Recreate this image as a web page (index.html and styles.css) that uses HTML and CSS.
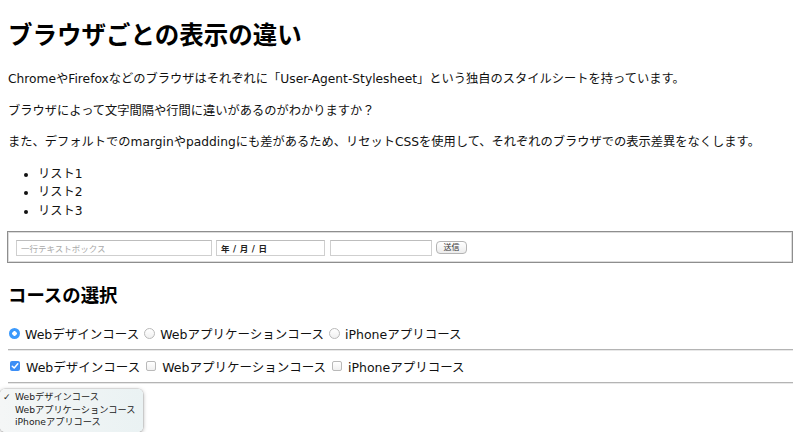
FILE: index.html
```html
<!DOCTYPE html>
<html lang="ja">
<head>
<meta charset="utf-8">
<title>ブラウザごとの表示の違い</title>
<link rel="stylesheet" href="styles.css">
</head>
<body>
<h1 class="title">ブラウザごとの表示の違い</h1>
<p class="text">ChromeやFirefoxなどのブラウザはそれぞれに「User-Agent-Stylesheet」という独自のスタイルシートを持っています。</p>
<p class="text">ブラウザによって文字間隔や行間に違いがあるのがわかりますか？</p>
<p class="text">また、デフォルトでのmarginやpaddingにも差があるため、リセットCSSを使用して、それぞれのブラウザでの表示差異をなくします。</p>
<ul class="list">
  <li>リスト1</li>
  <li>リスト2</li>
  <li>リスト3</li>
</ul>
<div class="fieldset">
  <span class="input input-text"><span class="placeholder">一行テキストボックス</span></span>
  <span class="input input-date">年 / 月 / 日</span>
  <span class="input input-blank"></span>
  <span class="button">送信</span>
</div>
<h2 class="subtitle">コースの選択</h2>
<div class="choice-row first">
  <span class="radio checked"></span><span class="label">Webデザインコース</span>
  <span class="radio"></span><span class="label">Webアプリケーションコース</span>
  <span class="radio"></span><span class="label">iPhoneアプリコース</span>
</div>
<div class="rule"></div>
<div class="choice-row second">
  <span class="check checked"><svg width="8" height="8" viewBox="0 0 8 8"><path d="M1.3 4.2 L3.2 6 L6.8 1.8" fill="none" stroke="#fff" stroke-width="1.5" stroke-linecap="round" stroke-linejoin="round"/></svg></span><span class="label">Webデザインコース</span>
  <span class="check"></span><span class="label">Webアプリケーションコース</span>
  <span class="check"></span><span class="label">iPhoneアプリコース</span>
</div>
<div class="rule last"></div>
<div class="popup">
  <div class="option"><span class="tick">✓</span>Webデザインコース</div>
  <div class="option">Webアプリケーションコース</div>
  <div class="option">iPhoneアプリコース</div>
</div>
</body>
</html>
```
FILE: styles.css
```css
html, body {
  margin: 0;
  padding: 0;
  background: #fff;
}
body {
  padding: 0 7px 0 8px;
  font-family: "DejaVu Sans", "Noto Sans CJK JP", sans-serif;
  font-size: 12.25px;
  color: #111;
}
.title {
  margin: 19px 0 0;
  font-family: "Noto Sans CJK JP", sans-serif;
  font-size: 24.5px;
  line-height: 30px;
  font-weight: bold;
  color: #000;
}
.text {
  margin: 0;
  margin-top: 13.5px;
  line-height: 18px;
  word-spacing: 0.5px;
}
.title + .text {
  margin-top: 21px;
}
.list {
  margin: 13.5px 0 0;
  padding-left: 30px;
  line-height: 18.5px;
}
.fieldset {
  margin: 11px 0 0 -1px;
  height: 29px;
  border: 1px solid #8e8e8e;
  box-shadow: inset 0 0 0 1px #dcdcdc;
  display: flex;
  align-items: center;
  padding: 1px 0 0 8px;
}
.input {
  box-sizing: border-box;
  height: 16px;
  border: 1px solid #cfcfcf;
  border-top-color: #bdbdbd;
  background: #fff;
  display: flex;
  align-items: center;
  padding-left: 4px;
  font-size: 8.5px;
}
.input-text { width: 196px; }
.input-date { width: 109px; margin-left: 4px; font-weight: bold; color: #222; letter-spacing: 0.3px; }
.input-blank { width: 102px; margin-left: 5px; }
.placeholder { color: #aaa; }
.button {
  box-sizing: border-box;
  margin-left: 4px;
  width: 31px;
  height: 13px;
  border: 1px solid #b4b4b4;
  border-radius: 4px;
  background: linear-gradient(#fff, #ececec);
  font-size: 8px;
  line-height: 11px;
  text-align: center;
  color: #333;
}
.subtitle {
  margin: 19px 0 0;
  font-family: "Noto Sans CJK JP", sans-serif;
  font-size: 18.4px;
  line-height: 24px;
  font-weight: bold;
  color: #000;
}
.choice-row {
  height: 18px;
  display: flex;
  align-items: center;
  padding-left: 1px;
  font-size: 12.5px;
}
.choice-row.first {
  margin-top: 18px;
}
.choice-row.second {
  margin-top: 6px;
}
.label {
  margin-right: 5px;
}
.radio {
  box-sizing: border-box;
  width: 11px;
  height: 11px;
  border-radius: 50%;
  border: 1px solid #b9b9b9;
  background: linear-gradient(#fff, #f0f0f0);
  margin-right: 5px;
  flex: none;
}
.radio.checked {
  border: none;
  background: radial-gradient(circle, #fff 0 2px, #3b99fc 2.5px);
}
.check {
  box-sizing: border-box;
  width: 10px;
  height: 10px;
  border-radius: 2px;
  border: 1px solid #b9b9b9;
  background: linear-gradient(#fff, #f0f0f0);
  margin-right: 6px;
  margin-left: 1px;
  flex: none;
  display: flex;
  align-items: center;
  justify-content: center;
}
.check.checked {
  border: none;
  background: #3b8ef6;
}
.rule {
  margin-top: 7px;
  height: 1px;
  background: #b4b4b4;
  border-bottom: 1px solid #e8e8e8;
}
.rule.last {
  margin-top: 7px;
}
.popup {
  margin: 5px 0 0 -8px;
  width: 143px;
  height: 43px;
  box-sizing: border-box;
  padding: 2px 0 0 0;
  border-radius: 5px;
  background: linear-gradient(90deg, #f4f6f6, #eaf2f3);
  box-shadow: 0 1px 4px rgba(0, 0, 0, 0.35), 0 0 0 0.5px rgba(0, 0, 0, 0.15);
  font-size: 9.2px;
  line-height: 12.5px;
  color: #222;
}
.option {
  padding-left: 15px;
  position: relative;
}
.tick {
  position: absolute;
  left: 3px;
  top: 0;
  font-weight: bold;
  font-size: 9px;
}
```
